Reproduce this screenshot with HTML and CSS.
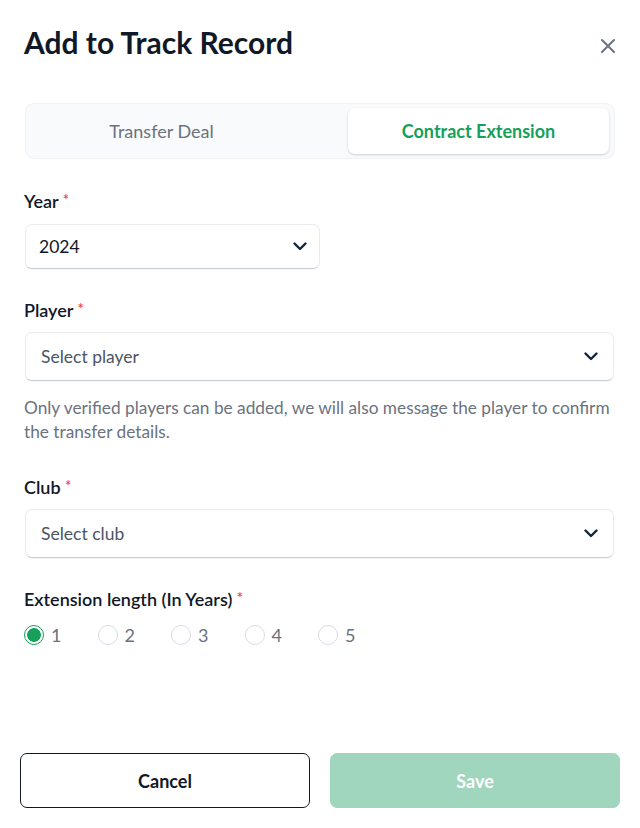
FILE: index.html
```html
<!DOCTYPE html>
<html>
<head>
<meta charset="utf-8">
<link rel="stylesheet" href="styles.css">
</head>
<body>
<div class="modal">
  <div class="header">
    <h1 class="title">Add to Track Record</h1>
    <button class="close" aria-label="Close">
      <svg width="16" height="16" viewBox="0 0 16 16"><path d="M2 2L14 14M14 2L2 14" stroke="#6b7280" stroke-width="2" stroke-linecap="round"/></svg>
    </button>
  </div>

  <div class="tabs">
    <div class="tab">Transfer Deal</div>
    <div class="tab active">Contract Extension</div>
  </div>

  <div class="field f-year">
    <label class="label">Year <span class="req">*</span></label>
    <div class="select small">
      <span class="value">2024</span>
      <svg class="chev" width="14" height="9" viewBox="0 0 14 9"><path d="M1.5 1.5L7 7L12.5 1.5" fill="none" stroke="#10263f" stroke-width="2.4" stroke-linecap="round" stroke-linejoin="round"/></svg>
    </div>
  </div>

  <div class="field f-player">
    <label class="label">Player <span class="req">*</span></label>
    <div class="select wide">
      <span class="placeholder">Select player</span>
      <svg class="chev" width="14" height="9" viewBox="0 0 14 9"><path d="M1.5 1.5L7 7L12.5 1.5" fill="none" stroke="#10263f" stroke-width="2.4" stroke-linecap="round" stroke-linejoin="round"/></svg>
    </div>
    <p class="help">Only verified players can be added, we will also message the player to confirm the transfer details.</p>
  </div>

  <div class="field f-club">
    <label class="label">Club <span class="req">*</span></label>
    <div class="select wide">
      <span class="placeholder">Select club</span>
      <svg class="chev" width="14" height="9" viewBox="0 0 14 9"><path d="M1.5 1.5L7 7L12.5 1.5" fill="none" stroke="#10263f" stroke-width="2.4" stroke-linecap="round" stroke-linejoin="round"/></svg>
    </div>
  </div>

  <div class="field f-ext">
    <label class="label">Extension length (In Years) <span class="req">*</span></label>
    <div class="radios">
      <label class="radio"><span class="dot checked"></span><span>1</span></label>
      <label class="radio"><span class="dot"></span><span>2</span></label>
      <label class="radio"><span class="dot"></span><span>3</span></label>
      <label class="radio"><span class="dot"></span><span>4</span></label>
      <label class="radio"><span class="dot"></span><span>5</span></label>
    </div>
  </div>

  <div class="footer">
    <button class="btn cancel">Cancel</button>
    <button class="btn save">Save</button>
  </div>
</div>
</body>
</html>
```

FILE: styles.css
```css
* { box-sizing: border-box; }
html, body { margin: 0; padding: 0; background: #fff; }
body { font-family: Lato, "Open Sans", sans-serif; color: #111827; }

.modal {
  width: 640px;
  height: 828px;
  display: flex;
  flex-direction: column;
  padding: 22px 24px 20px 24px;
}

.header {
  display: flex;
  align-items: center;
  justify-content: space-between;
  height: 40px;
}
.title {
  margin: 0;
  font-size: 30px;
  font-weight: 700;
  color: #111827;
}
.close {
  border: 0;
  background: none;
  padding: 0;
  width: 16px;
  height: 16px;
  margin-top: 8px;
  display: flex;
}

.tabs {
  margin-top: 41px;
  margin-left: 1px;
  margin-right: 1px;
  height: 56px;
  background: #f9fafb;
  border: 1px solid #f0f2f5;
  border-radius: 9px;
  padding: 4px 5px;
  display: flex;
  justify-content: space-between;
  align-items: stretch;
}
.tab {
  width: 261px;
  display: flex;
  align-items: center;
  justify-content: center;
  font-size: 18px;
  color: #6b7280;
  border-radius: 7px;
}
.tab.active {
  background: #fff;
  color: #16a05a;
  font-weight: 700;
  box-shadow: 0 1px 3px rgba(0,0,0,0.12), 0 1px 2px rgba(0,0,0,0.06);
}

.field {
  display: flex;
  flex-direction: column;
}

.label {
  font-size: 18px;
  font-weight: 600;
  color: #111827;
  line-height: 24px;
}
.f-year .label { margin: 30px 0 11px; }
.f-player .label { margin: 29px 0 10px; }
.f-club .label { margin: 31px 0 10px; }
.f-ext .label { margin: 29px 0 13px; }

.req {
  color: #ef4444;
  font-size: 15px;
  vertical-align: top;
  position: relative;
  top: -2px;
}

.select {
  display: flex;
  align-items: center;
  justify-content: space-between;
  background: #fff;
  border: 1px solid #e8ebf0;
  border-bottom-color: #c9ced6;
  border-radius: 7px;
  box-shadow: 0 1px 1px rgba(0,0,0,0.04);
}
.select.small {
  width: 295px;
  height: 45px;
  margin-left: 1px;
  padding: 0 12px 0 13px;
}
.select.wide {
  height: 49px;
  margin-left: 1px;
  width: 589px;
  padding: 0 15px 0 15px;
}
.value { font-size: 17.5px; color: #111827; }
.placeholder { font-size: 17.5px; color: #4b5563; }

.help {
  margin: 15px 0 0 0;
  font-size: 17.25px;
  line-height: 24px;
  color: #6b7280;
}

.radios {
  display: flex;
}
.radio {
  display: flex;
  align-items: center;
  width: 73.5px;
  font-size: 18px;
  color: #6b7280;
  height: 22px;
}
.dot {
  width: 20px;
  height: 20px;
  border-radius: 50%;
  border: 1px solid #d6dbe5;
  margin-right: 7px;
  background: #fff;
  flex-shrink: 0;
}
.dot.checked {
  border-color: #16a05a;
  background: radial-gradient(circle, #16a05a 0 6.5px, #fff 7.2px);
}

.footer {
  margin-top: auto;
  display: flex;
  gap: 20px;
  margin-left: -4px;
  margin-right: -4px;
}
.btn {
  flex: 1;
  height: 55px;
  border-radius: 7px;
  font-family: Lato, "Open Sans", sans-serif;
  font-size: 18px;
  font-weight: 700;
}
.cancel {
  background: #fff;
  border: 1px solid #111827;
  color: #111827;
}
.save {
  background: #a0d6bd;
  border: 1px solid #a0d6bd;
  color: #fff;
}
```
